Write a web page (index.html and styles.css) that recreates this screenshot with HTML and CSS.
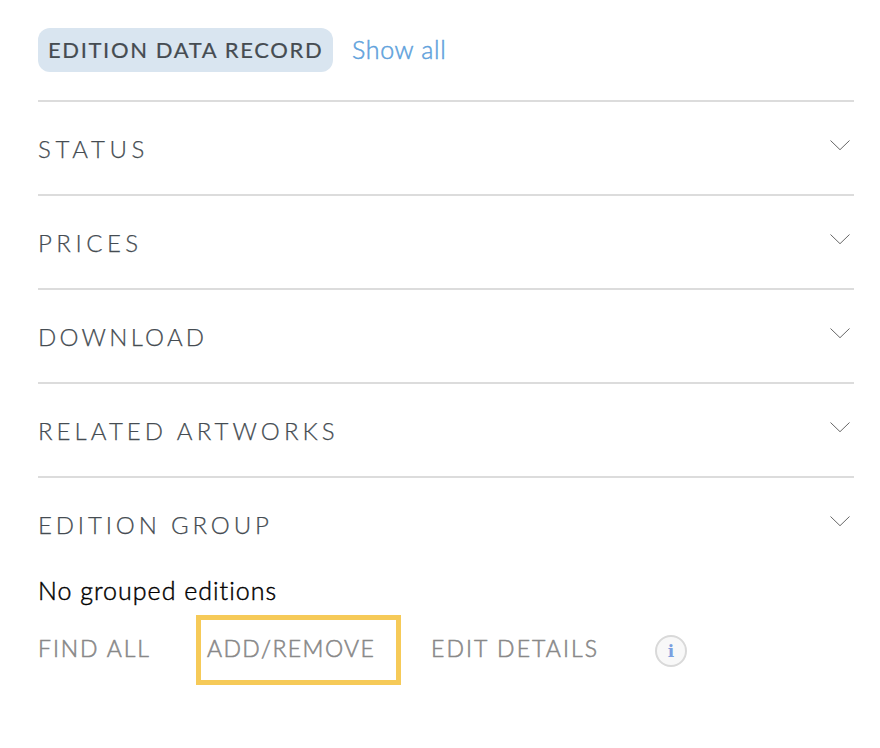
FILE: index.html
```html
<!DOCTYPE html>
<html lang="en">
<head>
<meta charset="utf-8">
<title>Edition data record</title>
<link rel="stylesheet" href="styles.css">
</head>
<body>
<main class="panel">
  <header class="top"><span class="tag">EDITION DATA RECORD</span><a class="show">Show all</a></header>
  <section class="row"><h2 class="t-status">STATUS</h2><svg class="chev" viewBox="0 0 20 12"><path d="M.5 .5 10 9.7 19.5 .5"/></svg></section>
  <section class="row"><h2 class="t-prices">PRICES</h2><svg class="chev" viewBox="0 0 20 12"><path d="M.5 .5 10 9.7 19.5 .5"/></svg></section>
  <section class="row"><h2 class="t-download">DOWNLOAD</h2><svg class="chev" viewBox="0 0 20 12"><path d="M.5 .5 10 9.7 19.5 .5"/></svg></section>
  <section class="row"><h2 class="t-related">RELATED ARTWORKS</h2><svg class="chev" viewBox="0 0 20 12"><path d="M.5 .5 10 9.7 19.5 .5"/></svg></section>
  <section class="row last"><h2 class="t-group">EDITION GROUP</h2><svg class="chev" viewBox="0 0 20 12"><path d="M.5 .5 10 9.7 19.5 .5"/></svg></section>
  <p class="empty">No grouped editions</p>
  <nav class="actions">
    <a class="find">FIND ALL</a><a class="add">ADD/REMOVE</a><a class="edit">EDIT DETAILS</a><span class="info">i</span>
  </nav>
</main>
</body>
</html>
```
FILE: styles.css
```css
* { box-sizing: border-box; }
body { margin: 0; background: #fff; font-family: Lato, sans-serif; color: #454c52; }
.panel { width: 816px; margin-left: 38px; padding-top: 28px; }
.top { display: flex; height: 72px; align-items: flex-start; }
.tag { width: 295px; height: 44px; padding-left: 10px; border-radius: 12px; background: #d9e5f0; font-size: 22px; line-height: 44px; letter-spacing: 1.63px; white-space: nowrap; -webkit-text-stroke: .2px #45494e; }
.show { margin-left: 19px; font-size: 25px; line-height: 42px; letter-spacing: .65px; font-weight: 300; color: #5fa2dc; -webkit-text-stroke: .5px #5fa2dc; white-space: nowrap; }
.row { display: flex; justify-content: space-between; height: 94px; border-top: 2px solid #dcdcdc; }
h2 { margin: 0; padding-top: 30px; font-size: 24px; line-height: 34px; font-weight: 300; letter-spacing: 3.5px; white-space: nowrap; -webkit-text-stroke: .25px #454c52; }
.t-status { letter-spacing: 4.6px; }
.t-prices { letter-spacing: 4.5px; }
.t-download { letter-spacing: 3.25px; }
.t-related { letter-spacing: 4.05px; }
.t-group { letter-spacing: 3.85px; }
.chev { width: 20px; height: 12px; margin: 38px 4px 0 0; fill: none; stroke: #666; stroke-width: 1; }
.empty { margin: 0; font-size: 25px; line-height: 32px; height: 41px; font-weight: 300; letter-spacing: 1px; color: #000; white-space: nowrap; -webkit-text-stroke: .45px #000; }
.last { height: 98px; }
.actions { display: flex; height: 70px; line-height: 66px; font-size: 23px; font-weight: 300; letter-spacing: 1.9px; color: #888; white-space: nowrap; -webkit-text-stroke: .55px #888; }
.find { width: 158px; }
.add { width: 205px; border: 5px solid #f6ca58; padding-left: 6px; line-height: 56px; letter-spacing: 1.4px; }
.edit { width: 224px; margin-left: 30px; letter-spacing: 2.08px; }
.info { width: 32px; height: 32px; margin-top: 20px; border: 2px solid #d9d9d9; border-radius: 50%; background: #f8f8f8; color: #7ba0e0; font: bold 17px/29px "DejaVu Serif", serif; text-align: center; letter-spacing: 0; -webkit-text-stroke: 0; }
```
